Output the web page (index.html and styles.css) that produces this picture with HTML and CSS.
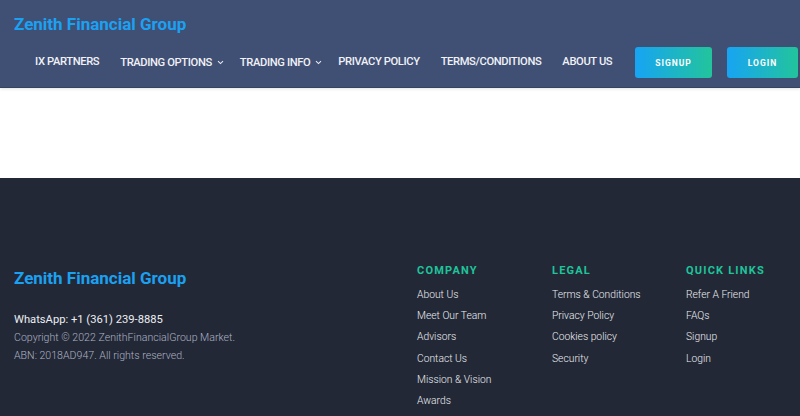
FILE: index.html
```html
<!DOCTYPE html>
<html lang="en">
<head>
<meta charset="utf-8">
<title>Zenith Financial Group</title>
<link rel="stylesheet" href="styles.css">
</head>
<body>
<header class="header">
  <div class="brand">Zenith Financial Group</div>
  <nav class="nav">
    <ul class="menu">
      <li class="menu-item">IX PARTNERS</li>
      <li class="menu-item">TRADING OPTIONS<span class="caret"><svg width="7" height="5" viewBox="0 0 7 5"><path d="M1 1.2 L3.5 3.6 L6 1.2" fill="none" stroke="#e6e9f0" stroke-width="1.1"/></svg></span></li>
      <li class="menu-item">TRADING INFO<span class="caret"><svg width="7" height="5" viewBox="0 0 7 5"><path d="M1 1.2 L3.5 3.6 L6 1.2" fill="none" stroke="#e6e9f0" stroke-width="1.1"/></svg></span></li>
      <li class="menu-item">PRIVACY POLICY</li>
      <li class="menu-item">TERMS/CONDITIONS</li>
      <li class="menu-item">ABOUT US</li>
    </ul>
    <div class="actions">
      <a class="btn btn-signup">SIGNUP</a>
      <a class="btn btn-login">LOGIN</a>
    </div>
  </nav>
</header>
<main class="content"></main>
<footer class="footer">
  <div class="footer-info">
    <div class="footer-brand">Zenith Financial Group</div>
    <div class="whatsapp">WhatsApp: +1 (361) 239-8885</div>
    <div class="legal-text">Copyright © 2022 ZenithFinancialGroup Market.</div>
    <div class="legal-text">ABN: 2018AD947. All rights reserved.</div>
  </div>
  <div class="footer-cols">
    <div class="col col-company">
      <h4 class="col-title">COMPANY</h4>
      <ul class="links">
        <li>About Us</li>
        <li>Meet Our Team</li>
        <li>Advisors</li>
        <li>Contact Us</li>
        <li>Mission &amp; Vision</li>
        <li>Awards</li>
      </ul>
    </div>
    <div class="col col-legal">
      <h4 class="col-title">LEGAL</h4>
      <ul class="links">
        <li>Terms &amp; Conditions</li>
        <li>Privacy Policy</li>
        <li>Cookies policy</li>
        <li>Security</li>
      </ul>
    </div>
    <div class="col col-quick">
      <h4 class="col-title">QUICK LINKS</h4>
      <ul class="links">
        <li>Refer A Friend</li>
        <li>FAQs</li>
        <li>Signup</li>
        <li>Login</li>
      </ul>
    </div>
  </div>
</footer>
</body>
</html>
```

FILE: styles.css
```css
* { box-sizing: border-box; }
html, body { margin: 0; padding: 0; }
body {
  width: 800px;
  height: 416px;
  overflow: hidden;
  font-family: Roboto, "Liberation Sans", sans-serif;
  background: #fff;
}
.header {
  height: 88px;
  background: #404f74;
  border-bottom: 1px solid #36425f;
  box-shadow: 0 1px 3px rgba(0,0,0,0.12);
  padding: 13px 2px 0 14px;
  position: relative;
  z-index: 1;
}
.brand {
  color: #1ba1f2;
  font-weight: 700;
  font-size: 17px;
  line-height: 22px;
}
.nav {
  display: flex;
  align-items: center;
  margin-top: 12px;
}
.menu {
  list-style: none;
  margin: 0 0 0 21px;
  padding: 0;
  display: flex;
  gap: 21px;
}
.menu-item {
  color: #f0f2f7;
  font-size: 11.2px;
  font-weight: 500;
  letter-spacing: -0.38px;
  line-height: 30px;
  white-space: nowrap;
}
.caret {
  display: inline-block;
  margin-left: 5px;
  margin-right: -5px;
  vertical-align: 1px;
}
.actions {
  display: flex;
  gap: 15px;
  margin-left: auto;
}
.btn {
  display: flex;
  align-items: center;
  justify-content: center;
  height: 31px;
  border-radius: 3px;
  color: #fff;
  font-size: 8.5px;
  font-weight: 700;
  letter-spacing: 1px;
  background: linear-gradient(90deg, #17a4f3 0%, #22c49c 100%);
}
.btn-signup { width: 77px; }
.btn-login { width: 71px; }
.content {
  height: 90px;
  background: #fff;
}
.footer {
  height: 238px;
  background: #232836;
  display: flex;
  padding: 89px 0 0 14px;
}
.footer-info { width: 403px; }
.footer-brand {
  color: #1ba1f2;
  font-weight: 700;
  font-size: 17px;
  line-height: 22px;
}
.whatsapp {
  margin-top: 22px;
  color: #eceef2;
  font-size: 11.2px;
  line-height: 18px;
}
.legal-text {
  color: #aab2c3;
  font-size: 10.6px;
  line-height: 18px;
  font-weight: 300;
}
.footer-cols {
  display: flex;
  margin-top: -4px;
}
.col-company { width: 135px; }
.col-legal { width: 134px; }
.col-quick { width: 110px; }
.col-title {
  margin: 0;
  color: #1fc49b;
  font-size: 11px;
  line-height: 16px;
  font-weight: 700;
  letter-spacing: 1.2px;
}
.links {
  list-style: none;
  margin: 5px 0 0 0;
  padding: 0;
}
.links li {
  color: #eceef2;
  font-size: 10.3px;
  line-height: 21.2px;
  font-weight: 300;
  white-space: nowrap;
}
```
